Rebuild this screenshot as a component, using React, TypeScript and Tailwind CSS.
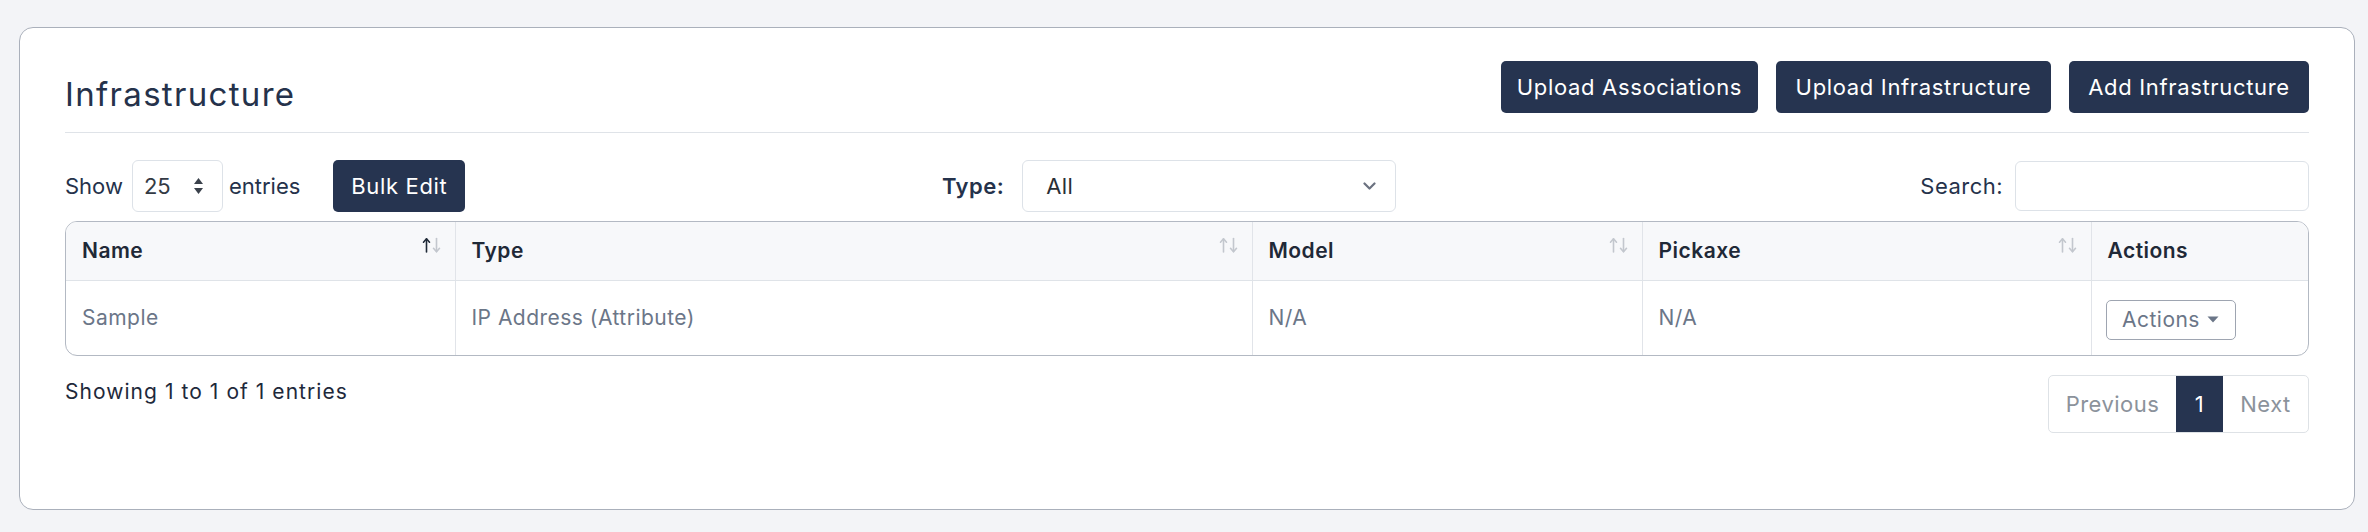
import React from 'react';

const columns = [
  { key: 'name', label: 'Name', width: 'w-[389px]', sortable: true, active: true },
  { key: 'type', label: 'Type', width: 'w-[797px]', sortable: true, active: false },
  { key: 'model', label: 'Model', width: 'w-[390px]', sortable: true, active: false },
  { key: 'pickaxe', label: 'Pickaxe', width: 'w-[449px]', sortable: true, active: false },
  { key: 'actions', label: 'Actions', width: '', sortable: false, active: false },
];

const rows = [{ name: 'Sample', type: 'IP Address (Attribute)', model: 'N/A', pickaxe: 'N/A' }];

const SortIcon: React.FC<{ active: boolean }> = ({ active }) => (
  <svg width="20" height="17" viewBox="0 0 20 17" fill="none" strokeWidth="1.6" strokeLinecap="round" strokeLinejoin="round">
    <g stroke={active ? '#1f2937' : '#c3c7ce'}>
      <path d="M4.5 2v13" />
      <path d="M1.5 5.2 4.5 1.8 7.5 5.2" />
    </g>
    <g stroke="#c3c7ce">
      <path d="M14.5 1.5v13" />
      <path d="M11.5 11.3 14.5 14.8 17.5 11.3" />
    </g>
  </svg>
);

const navyBtn =
  'h-[52px] rounded-[5px] bg-[#263450] text-white text-[22px] tracking-[0.03em] flex items-center justify-center';

const App: React.FC = () => {
  return (
    <div className="min-h-[532px] bg-[#f3f4f7] pt-[27px] pl-[19px] pr-[13px] font-['Inter',sans-serif] tracking-[0.03em]">
      <div className="h-[483px] bg-white border border-[#aab0bb] rounded-[14px] px-[45px] pt-[33px]">
        {/* header */}
        <div className="flex justify-between items-start pb-[19px] border-b border-[#dfe3e8]">
          <h1 className="mt-[14px] text-[33px] leading-[38px] font-normal tracking-[0.04em] text-[#25324b]">Infrastructure</h1>
          <div className="flex gap-[18px]">
            <button className={`${navyBtn} w-[257px]`}>Upload Associations</button>
            <button className={`${navyBtn} w-[275px]`}>Upload Infrastructure</button>
            <button className={`${navyBtn} w-[240px]`}>Add Infrastructure</button>
          </div>
        </div>

        {/* controls */}
        <div className="mt-[27px] h-[52px] grid grid-cols-[1fr_auto_1fr] items-center text-[22px] text-[#25324b]">
          <div className="flex items-center tracking-normal">
            <span>Show</span>
            <div className="ml-[9px] w-[91px] h-[52px] border border-[#dde2e8] rounded-[6px] flex items-center justify-between pl-[11px] pr-[18px] text-[#333a44]">
              <span>25</span>
              <svg width="11" height="18" viewBox="0 0 11 18" fill="#3a414b">
                <path d="M5.5 1 10 7H1z" />
                <path d="M5.5 17 10 11H1z" />
              </svg>
            </div>
            <span className="ml-[6px]">entries</span>
            <button className={`${navyBtn} ml-[33px] w-[132px]`}>Bulk Edit</button>
          </div>

          <div className="flex items-center pr-[36px]">
            <span className="font-semibold">Type:</span>
            <div className="ml-[18px] w-[374px] h-[52px] border border-[#dde2e8] rounded-[6px] flex items-center justify-between pl-[23px] pr-[19px] text-[#2a2f36]">
              <span>All</span>
              <svg width="13" height="8" viewBox="0 0 13 8" fill="none" stroke="#6b7280" strokeWidth="2.2" strokeLinecap="round" strokeLinejoin="round">
                <path d="M1.5 1.5 6.5 6.5 11.5 1.5" />
              </svg>
            </div>
          </div>

          <div className="flex items-center justify-end">
            <span className="mr-[12px]">Search:</span>
            <input className="w-[294px] h-[50px] border border-[#dde2e8] rounded-[6px] outline-none px-3" />
          </div>
        </div>

        {/* table */}
        <div className="mt-[9px] border border-[#b3b9c3] rounded-[12px] overflow-hidden">
          <table className="w-full table-fixed border-collapse">
            <thead>
              <tr className="bg-[#f7f8fa]">
                {columns.map((c, i) => (
                  <th
                    key={c.key}
                    className={`${c.width} relative h-[58px] border-b border-[#dfe3e8] ${i > 0 ? 'border-l border-l-[#e1e4e9]' : ''} pl-[16px] text-left text-[21px] font-semibold text-[#1f2937]`}
                  >
                    {c.label}
                    {c.sortable && (
                      <span className="absolute right-[13px] top-[15px] flex">
                        <SortIcon active={c.active} />
                      </span>
                    )}
                  </th>
                ))}
              </tr>
            </thead>
            <tbody>
              {rows.map(r => (
                <tr key={r.name} className="text-[21px] text-[#6b7688]">
                  <td className="h-[75px] pl-[16px]">{r.name}</td>
                  <td className="pl-[16px] border-l border-[#e1e4e9]">{r.type}</td>
                  <td className="pl-[16px] border-l border-[#e1e4e9]">{r.model}</td>
                  <td className="pl-[16px] border-l border-[#e1e4e9]">{r.pickaxe}</td>
                  <td className="pl-[14px] border-l border-[#e1e4e9]">
                    <button className="w-[130px] h-[40px] mt-[4px] border border-[#9ea5b1] rounded-[5px] flex items-center justify-center gap-[7px] text-[#6b7688]">
                      <span>Actions</span>
                      <svg width="12" height="7" viewBox="0 0 12 7" fill="#6b7688">
                        <path d="M0.5 0.5h11L6 6.5z" />
                      </svg>
                    </button>
                  </td>
                </tr>
              ))}
            </tbody>
          </table>
        </div>

        {/* footer */}
        <div className="mt-[19px] flex justify-between items-start">
          <div className="pt-[2px] text-[21px] leading-[30px] tracking-[0.05em] text-[#1e293b]">Showing 1 to 1 of 1 entries</div>
          <div className="flex h-[58px] border border-[#dee2e6] rounded-[5px] overflow-hidden text-[22px]">
            <span className="w-[127px] flex items-center justify-center text-[#8b929b]">Previous</span>
            <span className="w-[47px] flex items-center justify-center bg-[#263450] text-white">1</span>
            <span className="w-[85px] flex items-center justify-center text-[#8b929b]">Next</span>
          </div>
        </div>
      </div>
    </div>
  );
};

export default App;
